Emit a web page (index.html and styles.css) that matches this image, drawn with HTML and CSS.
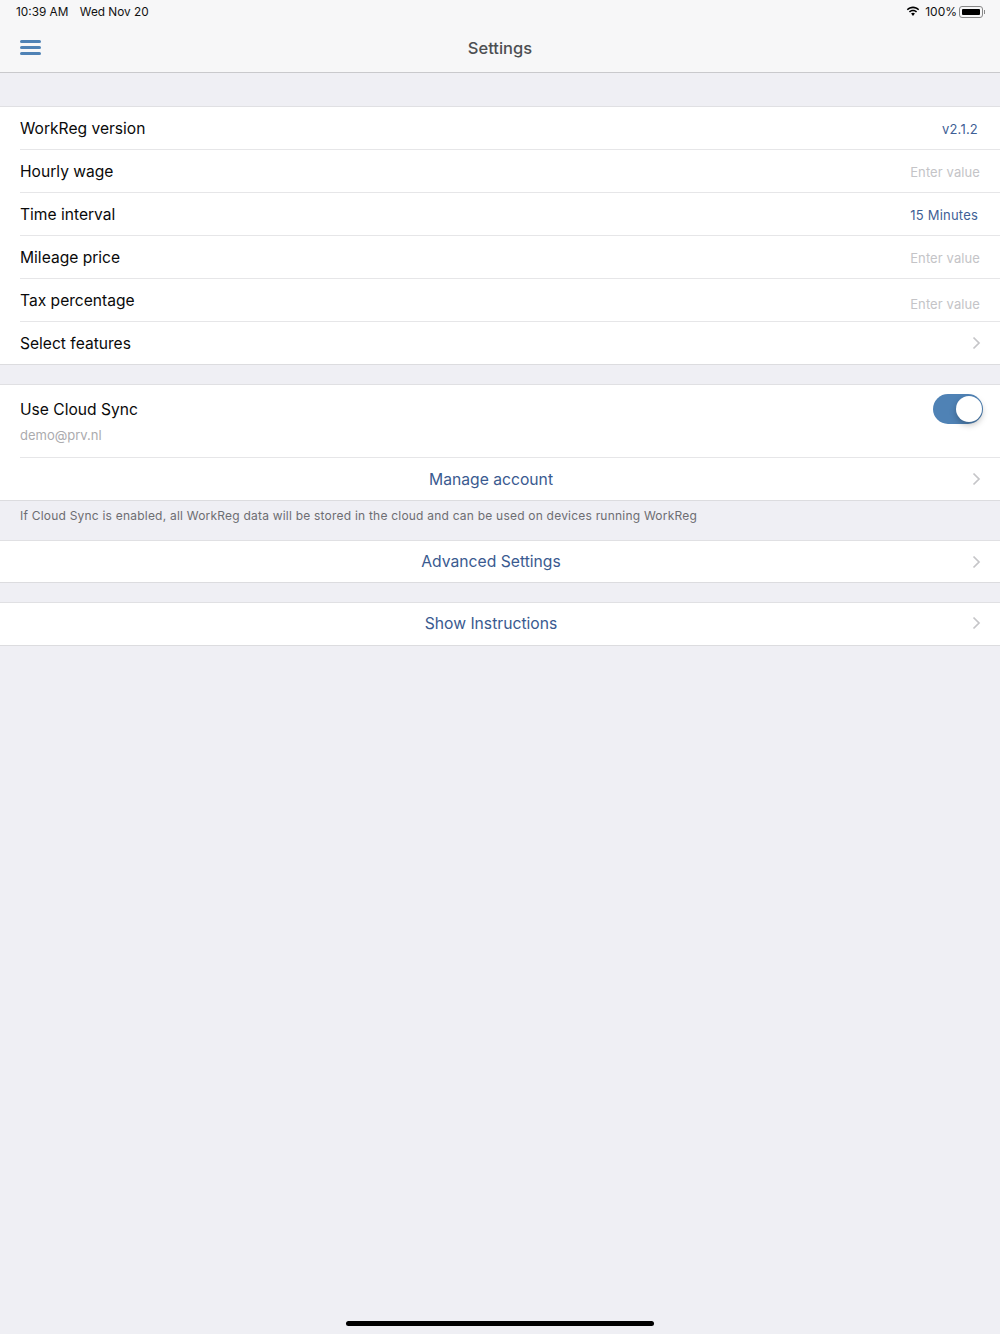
FILE: index.html
```html
<!DOCTYPE html>
<html lang="en">
<head>
    <meta charset="UTF-8">
    <meta name="viewport" content="width=device-width, initial-scale=1.0">
    <title>Settings</title>
    <link rel="stylesheet" href="styles.css">
</head>
<body>

    <div class="app">
        <!-- Status bar + nav bar -->
        <header class="topbar">
            <div class="status">
                <span class="clock">10:39 AM</span>
                <span class="date">Wed Nov 20</span>
                <span class="status-right">
                    <svg class="wifi" width="14" height="11" viewBox="0 0 14 11">
                        <path d="M7 2.200c2 0 3.800.8 5.200 2.100l1-1.100C11.500 1.600 9.300.6 7 .6S2.500 1.600.8 3.200l1 1.100C3.200 3 5 2.200 7 2.200z" fill="#000"/>
                        <path d="M7 5.300c1.200 0 2.200.4 3 1.200l1.100-1.100C10 4.300 8.600 3.700 7 3.700s-3 .6-4.100 1.700L4 6.500c.8-.8 1.800-1.200 3-1.200z" fill="#000"/>
                        <path d="M7 6.800c-.8 0-1.400.3-1.900.8L7 10l1.900-2.400c-.5-.5-1.100-.8-1.900-.8z" fill="#000"/>
                    </svg>
                    <span class="percent">100%</span>
                    <span class="battery"><span class="battery-fill"></span></span>
                    <span class="battery-tip"></span>
                </span>
            </div>
            <nav class="navbar">
                <button class="menu" aria-label="Menu">
                    <span></span><span></span><span></span>
                </button>
                <h1>Settings</h1>
            </nav>
        </header>

        <!-- General -->
        <section class="group first">
            <div class="row">
                <span class="label">WorkReg version</span>
                <span class="value">v2.1.2</span>
            </div>
            <div class="row">
                <span class="label">Hourly wage</span>
                <span class="placeholder">Enter value</span>
            </div>
            <div class="row">
                <span class="label">Time interval</span>
                <span class="value">15 Minutes</span>
            </div>
            <div class="row">
                <span class="label">Mileage price</span>
                <span class="placeholder">Enter value</span>
            </div>
            <div class="row">
                <span class="label">Tax percentage</span>
                <span class="placeholder low">Enter value</span>
            </div>
            <div class="row">
                <span class="label">Select features</span>
                <svg class="chevron" width="9" height="14" viewBox="0 0 9 14"><path d="M1.500 1.500 7 7l-5.500 5.500"/></svg>
            </div>
        </section>

        <!-- Cloud sync -->
        <section class="group">
            <div class="row cloud">
                <div>
                    <div class="cloud-label">Use Cloud Sync</div>
                    <div class="account">demo@prv.nl</div>
                </div>
                <span class="toggle"><span class="knob"></span></span>
            </div>
            <div class="row link">
                <span class="link-text">Manage account</span>
                <svg class="chevron" width="9" height="14" viewBox="0 0 9 14"><path d="M1.500 1.500 7 7l-5.500 5.500"/></svg>
            </div>
        </section>
        <p class="note">If Cloud Sync is enabled, all WorkReg data will be stored in the cloud and can be used on devices running WorkReg</p>

        <section class="group flush">
            <div class="row link">
                <span class="link-text">Advanced Settings</span>
                <svg class="chevron" width="9" height="14" viewBox="0 0 9 14"><path d="M1.500 1.500 7 7l-5.500 5.500"/></svg>
            </div>
        </section>

        <section class="group">
            <div class="row link raised">
                <span class="link-text">Show Instructions</span>
                <svg class="chevron" width="9" height="14" viewBox="0 0 9 14"><path d="M1.500 1.500 7 7l-5.500 5.500"/></svg>
            </div>
        </section>

        <div class="home-bar"></div>
    </div>

</body>
</html>
```

FILE: styles.css
```css
body {
    font-family: Inter, "Open Sans", sans-serif;
    background-color: #efeff4;
    margin: 0;
    padding: 0;
}
.app {
    position: relative;
    height: 1334px;
    overflow: hidden;
}
.topbar {
    height: 72px;
    background: #f7f7f8;
    border-bottom: 1px solid #c9c9cc;
}
.status {
    display: flex;
    align-items: center;
    box-sizing: border-box;
    height: 24px;
    padding: 0 15px 0 16px;
    font-size: 11.800px;
    color: #111;
}
.clock, .date, .percent {
    margin-top: -1px;
}
.date {
    margin-left: 11.500px;
}
.status-right {
    display: flex;
    align-items: center;
    margin-left: auto;
}
.wifi {
    margin-right: 5px;
    margin-top: -2px;
}
.percent {
    font-size: 12px;
}
.battery {
    display: block;
    width: 24px;
    height: 12px;
    box-sizing: border-box;
    padding: 2px;
    margin-left: 2px;
    border: 1px solid #888;
    border-radius: 3px;
}
.battery-fill {
    display: block;
    height: 100%;
    background: #000;
    border-radius: 1px;
}
.battery-tip {
    display: block;
    width: 1px;
    height: 4px;
    margin-left: 1px;
    background: #888;
}
.navbar {
    display: flex;
    align-items: center;
    justify-content: center;
    position: relative;
    height: 48px;
}
.navbar h1 {
    margin: 0;
    font-size: 16.500px;
    font-weight: 500;
    color: #4d4f52;
}
.menu {
    position: absolute;
    left: 20px;
    top: 16px;
    display: flex;
    flex-direction: column;
    gap: 3px;
    width: 21px;
    padding: 0;
    border: none;
    background: none;
}
.menu span {
    display: block;
    height: 3px;
    background: #4f82b5;
    border-radius: 1.500px;
}
.group {
    margin-top: 19px;
    background: white;
    border-top: 1px solid #e0e0e3;
    border-bottom: 1px solid #dcdcdf;
}
.group.first {
    margin-top: 33px;
}
.group.flush {
    margin-top: 0;
}
.group.flush .row {
    height: 41px;
}
.row {
    display: flex;
    align-items: center;
    justify-content: space-between;
    height: 42px;
    margin-left: 20px;
    padding-right: 20px;
    border-bottom: 1px solid #e6e6e8;
}
.row:last-child {
    border-bottom: none;
}
.row > .chevron {
    margin-right: -1px;
}
.label {
    font-size: 15.600px;
    color: #0a0a0a;
}
.cloud-label {
    font-size: 15.600px;
    color: #0a0a0a;
}
.value {
    margin-top: 2px;
    margin-right: 2px;
    font-size: 13px;
    letter-spacing: 0.2px;
    color: #3f5f96;
}
.placeholder {
    margin-top: 2px;
    font-size: 13px;
    letter-spacing: 0.1px;
    color: #c4c4c7;
}
.placeholder.low {
    margin-top: 7px;
}
.chevron {
    fill: none;
    stroke: #c5c5c8;
    stroke-width: 1.700;
}
.cloud {
    height: 72px;
    padding-right: 17px;
}
.account {
    margin-top: 8px;
    font-size: 13px;
    color: #ababae;
}
.toggle {
    display: block;
    position: relative;
    width: 50px;
    height: 30px;
    margin-top: -25px;
    background: #4f82b5;
    border-radius: 15px;
}
.knob {
    position: absolute;
    top: 2px;
    right: 1px;
    width: 26px;
    height: 26px;
    background: white;
    border-radius: 50%;
    box-shadow: 0 3px 6px rgba(0, 0, 0, 0.25);
}
.link {
    position: relative;
    justify-content: center;
    margin-left: 0;
    padding-right: 18px;
}
.link .chevron {
    position: absolute;
    right: 20px;
}
.link-text {
    font-size: 15.700px;
    color: #3a5a90;
}
.raised .link-text, .raised .chevron {
    margin-top: -2px;
}
.note {
    margin: 0;
    padding: 8px 20px 0;
    height: 31px;
    font-size: 12px;
    letter-spacing: 0.215px;
    line-height: 14px;
    color: #6d6d72;
}
.home-bar {
    position: absolute;
    left: 346px;
    bottom: 8px;
    width: 308px;
    height: 5px;
    background: #000;
    border-radius: 3px;
}
```
